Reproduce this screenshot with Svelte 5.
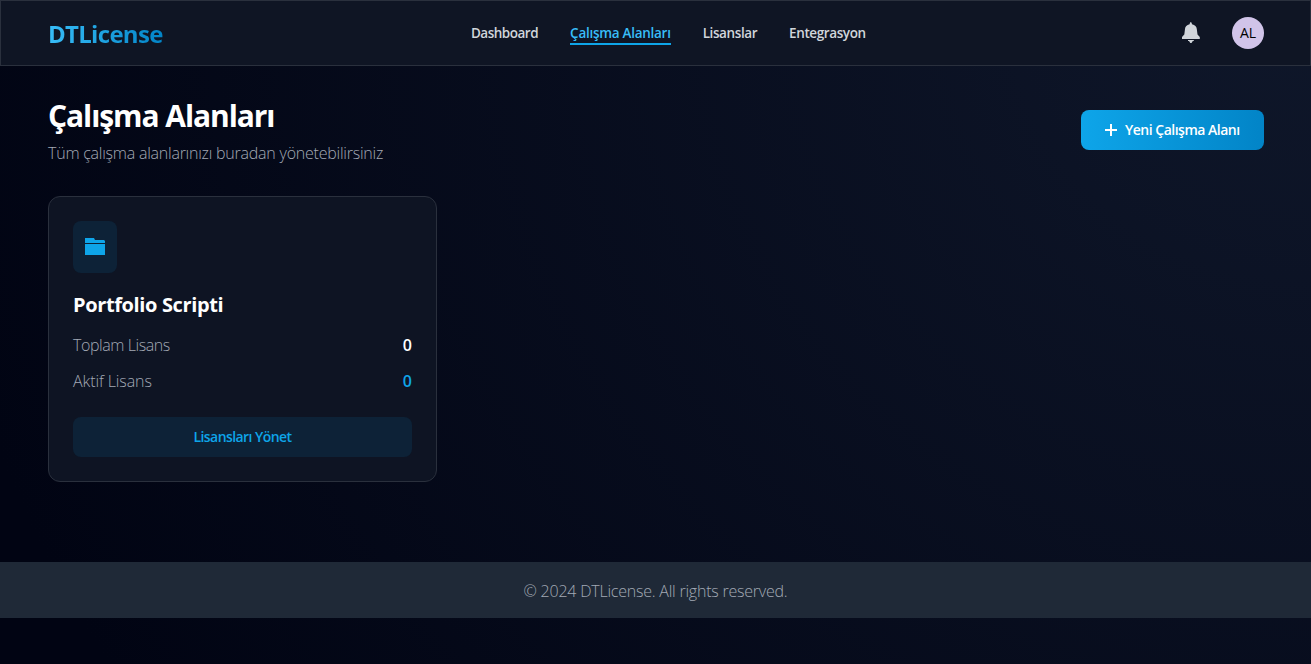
<script>
  let workspaces = [
    { name: 'Portfolio Scripti', total: 0, active: 0 },
  ];

  let links = ['Dashboard', 'Çalışma Alanları', 'Lisanslar', 'Entegrasyon'];
  let current = 'Çalışma Alanları';
</script>

<div class="page">
  <header>
    <a class="logo" href="#top">DTLicense</a>
    <nav>
      {#each links as link, i}
        <a href="#top" class="link-{i}" class:active={link === current} on:click={() => (current = link)}>{link}</a>
      {/each}
    </nav>
    <div class="user">
      <svg class="bell" width="20" height="22" viewBox="0 0 20 22" fill="currentColor">
        <path d="M9.8 0 Q10.8 0.3 11 2.3 C14 3 15.5 4.6 15.8 7 L16.5 12.5 L18.8 15 V17 H1 V15 L3.3 12.5 L4 7 C4.2 4.6 5.7 3 8.6 2.3 Q8.8 0.3 9.8 0Z" />
        <path d="M7 18H12.8V19H11.8L10.5 21H9.3L8 19H7Z" />
      </svg>
      <div class="avatar">AL</div>
    </div>
  </header>

  <main>
    <div class="title-row">
      <div>
        <h1>Çalışma Alanları</h1>
        <p>Tüm çalışma alanlarınızı buradan yönetebilirsiniz</p>
      </div>
      <button class="create">
        <svg width="12" height="12" viewBox="0 0 12 12"><path d="M6 0V12M0 6H12" stroke="currentColor" stroke-width="2" /></svg>
        <span>Yeni Çalışma Alanı</span>
      </button>
    </div>

    <div class="grid">
      {#each workspaces as workspace}
        <div class="card">
          <div class="icon">
            <svg width="20" height="17" viewBox="0 0 20 17" fill="currentColor">
              <path d="M0 0H9L10 2H19L20 3V5H0ZM0 6H20V17H0Z" />
            </svg>
          </div>
          <h2>{workspace.name}</h2>
          <div class="stat">
            <span class="total-label">Toplam Lisans</span>
            <b>{workspace.total}</b>
          </div>
          <div class="stat">
            <span class="active-label">Aktif Lisans</span>
            <b class="blue">{workspace.active}</b>
          </div>
          <button class="manage">Lisansları Yönet</button>
        </div>
      {/each}
    </div>
  </main>

  <footer>© 2024 DTLicense. All rights reserved.</footer>
</div>

<style>
  :global(body) {
    background: #020617;
  }

  .page {
    min-height: 664px;
    box-sizing: border-box;
    font-family: 'Open Sans', 'Noto Sans', sans-serif;
    font-size: 16px;
    line-height: 24px;
    color: #fff;
    background: radial-gradient(1400px 1300px at top right, #0f172a, #010413);
  }

  header {
    display: flex;
    justify-content: space-between;
    align-items: center;
    height: 66px;
    box-sizing: border-box;
    padding: 0 46px 0 47px;
    border: 1px solid #2a303d;
    background: #0f1524;
  }

  a {
    text-decoration: none;
    white-space: nowrap;
  }

  .logo {
    padding-top: 2px;
    font-size: 24px;
    font-weight: 700;
    line-height: 32px;
    letter-spacing: -0.7px;
    color: transparent;
    background: linear-gradient(to right, #38bdf8, #0284c7);
    background-clip: text;
  }

  nav {
    display: flex;
    gap: 32px;
  }

  nav a {
    box-sizing: border-box;
    height: 24px;
    font-size: 13.5px;
    font-weight: 600;
    line-height: 25px;
    letter-spacing: -0.4px;
    color: #d1d5db;
  }

  nav a.active {
    color: #38bdf8;
    border-bottom: 2px solid #0ea5e9;
  }

  .link-0 {
    letter-spacing: -0.49px;
  }

  .link-1 {
    letter-spacing: -0.28px;
  }

  .user {
    display: flex;
    align-items: center;
    gap: 31px;
    padding-left: 7px;
  }

  .bell {
    color: #d1d5db;
  }

  .avatar {
    width: 32px;
    height: 32px;
    border-radius: 50%;
    background: #d1c4e9;
    color: #000;
    font-size: 14px;
    line-height: 32px;
    text-align: center;
  }

  main {
    padding: 32px 47px 80px 48px;
  }

  .title-row {
    display: flex;
    justify-content: space-between;
    align-items: center;
    height: 64px;
    margin-bottom: 34px;
  }

  h1 {
    margin: 3px 0 7px;
    font-size: 30px;
    font-weight: 700;
    line-height: 36px;
    letter-spacing: -1.07px;
  }

  p {
    margin: 0;
    font-weight: 300;
    letter-spacing: -0.23px;
    color: #a3a9b5;
  }

  button {
    height: 40px;
    border: 0;
    border-radius: 8px;
    font-family: inherit;
    font-size: 14px;
    font-weight: 600;
    line-height: 20px;
    letter-spacing: -0.5px;
    white-space: nowrap;
  }

  .create {
    display: flex;
    align-items: center;
    gap: 8px;
    width: 183px;
    padding: 0 24px;
    color: #fff;
    background: linear-gradient(to right, #0ea5e9, #0284c7);
  }

  .create svg {
    flex-shrink: 0;
  }

  .grid {
    display: grid;
    grid-template-columns: repeat(3, 389px);
    gap: 24px;
  }

  .card {
    box-sizing: border-box;
    height: 286px;
    padding: 24px;
    border: 1px solid #2a303d;
    border-radius: 12px;
    background: #0e1423;
  }

  .icon {
    display: flex;
    align-items: center;
    justify-content: center;
    width: 44px;
    height: 52px;
    box-sizing: border-box;
    padding-bottom: 1px;
    border-radius: 8px;
    color: #0ea5e9;
    background: #0d2237;
  }

  h2 {
    margin: 18px 0 14px;
    font-size: 20px;
    font-weight: 700;
    line-height: 28px;
    letter-spacing: -0.37px;
  }

  .stat {
    display: flex;
    justify-content: space-between;
    margin-bottom: 12px;
    font-weight: 300;
    color: #a3a9b5;
  }

  .total-label {
    letter-spacing: -0.42px;
  }

  .active-label {
    letter-spacing: -0.1px;
  }

  b {
    font-weight: 600;
    color: #fff;
  }

  .blue {
    color: #0ea5e9;
  }

  .manage {
    width: 100%;
    margin-top: 12px;
    letter-spacing: -0.57px;
    color: #0ea5e9;
    background: #0d2237;
  }

  footer {
    height: 56px;
    line-height: 58px;
    text-align: center;
    font-weight: 300;
    letter-spacing: -0.22px;
    color: #a3a9b5;
    background: #1f2937;
  }
</style>
